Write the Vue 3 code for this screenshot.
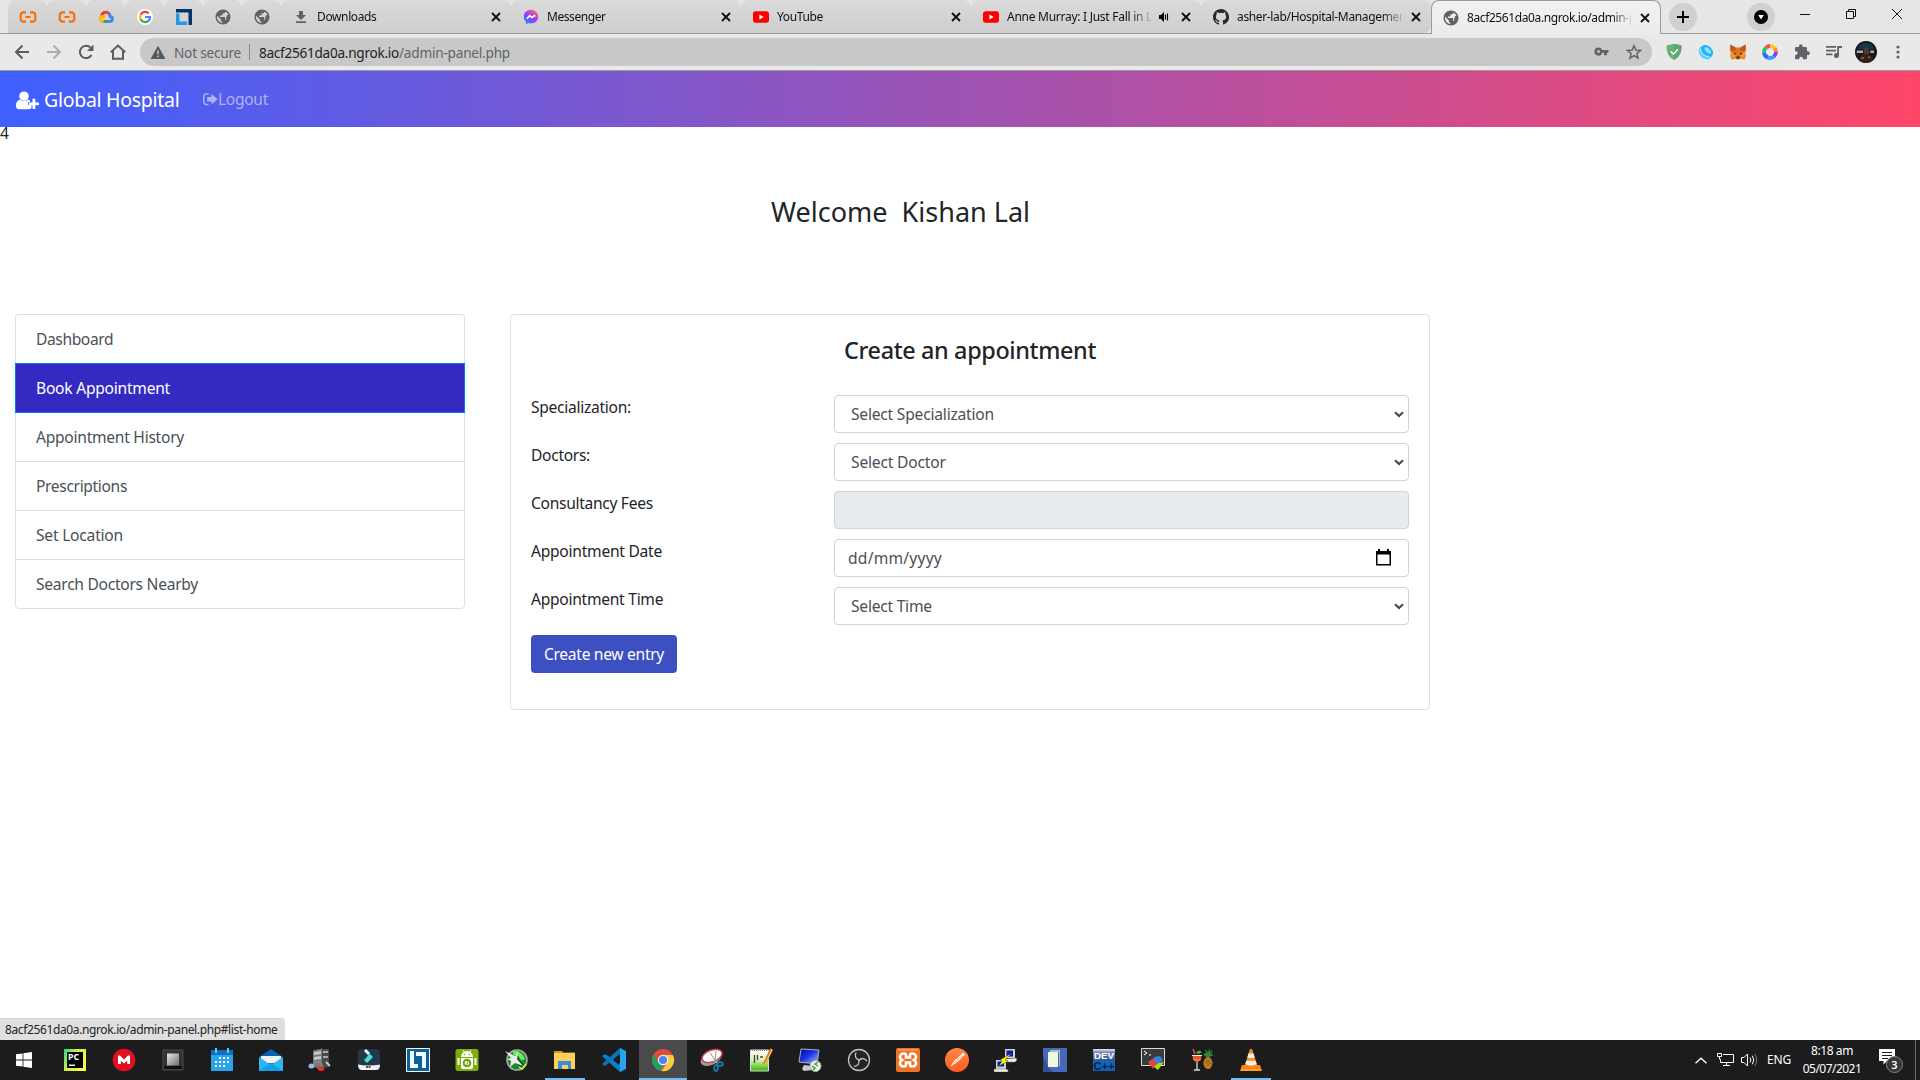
<script setup>
// Spreads a label over a given width by adjusting its tracking
const applyFit = (el, { value }) => {
  if (!value) return
  el.style.letterSpacing = '0px'
  const range = document.createRange()
  range.selectNodeContents(el)
  const natural = range.getBoundingClientRect().width
  el.style.letterSpacing = `${(value - natural) / el.textContent.length}px`
}
const vFit = { mounted: applyFit }

const pinned = ['cloud', 'cloud', 'gcp', 'google', 'linux', 'globe', 'globe']
const tabs = [
  { icon: 'download', title: 'Downloads', w: 59.5 },
  { icon: 'messenger', title: 'Messenger', w: 58.5 },
  { icon: 'youtube', title: 'YouTube', w: 46 },
  { icon: 'youtube', title: 'Anne Murray: I Just Fall in L', w: 145, audio: true },
  { icon: 'github', title: 'asher-lab/Hospital-Managemen', w: 169 },
  { icon: 'globe', title: '8acf2561da0a.ngrok.io/admin-pa', w: 175, active: true }
]

const menu = [
  { label: 'Dashboard', w: 77.2 },
  { label: 'Book Appointment', w: 134 },
  { label: 'Appointment History', w: 148 },
  { label: 'Prescriptions', w: 91 },
  { label: 'Set Location', w: 87 },
  { label: 'Search Doctors Nearby', w: 162 }
]
menu[1].active = true

const fields = [
  { label: 'Specialization:', lw: 100, kind: 'select', text: 'Select Specialization', w: 143 },
  { label: 'Doctors:', lw: 59, kind: 'select', text: 'Select Doctor', w: 94.8 },
  { label: 'Consultancy Fees', lw: 121.8, kind: 'readonly' },
  { label: 'Appointment Date', lw: 131, kind: 'date', text: 'dd/mm/yyyy', w: 94 },
  { label: 'Appointment Time', lw: 132.2, kind: 'select', text: 'Select Time', w: 80.8 }
]
</script>

<template>
  <div class="screen">
    <svg width="0" height="0" class="defs">
      <defs>
        <linearGradient id="msg" x1="0.2" y1="1" x2="0.8" y2="0">
          <stop offset="0" stop-color="#0a95ff" /><stop offset=".5" stop-color="#9a36ff" /><stop offset="1" stop-color="#ff6a68" />
        </linearGradient>
        <linearGradient id="pc" x1="0" y1="0" x2="1" y2=".6">
          <stop offset="0" stop-color="#21d789" /><stop offset=".45" stop-color="#c9ec4e" /><stop offset="1" stop-color="#fcf84a" />
        </linearGradient>
        <linearGradient id="chip" x1="0" y1="0" x2="1" y2="1">
          <stop offset="0" stop-color="#e8e8e8" /><stop offset="1" stop-color="#707070" />
        </linearGradient>
        <linearGradient id="blue" x1="0" y1="0" x2="1" y2="1">
          <stop offset="0" stop-color="#0008a8" /><stop offset=".45" stop-color="#1a2fe0" /><stop offset="1" stop-color="#b5c8ff" />
        </linearGradient>
        <linearGradient id="dev" x1="0" y1="0" x2="0" y2="1">
          <stop offset="0" stop-color="#e6e8f4" /><stop offset=".15" stop-color="#7c88bc" /><stop offset=".5" stop-color="#34549c" /><stop offset=".55" stop-color="#1765b8" /><stop offset="1" stop-color="#0f5fb4" />
        </linearGradient>
        <linearGradient id="green" x1="0" y1="0" x2="0" y2="1">
          <stop offset="0" stop-color="#fff" /><stop offset=".45" stop-color="#e0f4c0" /><stop offset="1" stop-color="#35b400" />
        </linearGradient>
        <linearGradient id="orange" x1="0" y1="0" x2="0" y2="1">
          <stop offset="0" stop-color="#ff8a45" /><stop offset="1" stop-color="#ff5a24" />
        </linearGradient>
        <symbol id="globe" viewBox="1.300 1.300 21.400 21.400">
          <path fill="#5f6368" d="M12 2C6.480 2 2 6.480 2 12s4.480 10 10 10 10-4.480 10-10S17.520 2 12 2zm-1 17.930c-3.950-.49-7-3.850-7-7.930 0-.62.08-1.210.21-1.790L9 15v1c0 1.100.9 2 2 2v1.930zm6.900-2.540c-.26-.81-1-1.390-1.900-1.390h-1v-3c0-.55-.45-1-1-1H8v-2h2c.55 0 1-.45 1-1V7h2c1.100 0 2-.9 2-2v-.41c2.930 1.190 5 4.060 5 7.410 0 2.080-.8 3.970-2.100 5.390z" />
          <path fill="#5f6368" d="M12 3c-3 0-5.500 1.200-7 3.500l5 3h1V7h2c1.100 0 2-.9 2-2V3.500zM20 9l-3 1-1 6 2 2c2-2 3-5 2-9z" />
        </symbol>
      </defs>
    </svg>

    <!-- Browser tab strip -->
    <header class="strip">
      <div v-for="(p, i) in pinned" :key="i" class="pin">
        <svg v-if="p === 'cloud'" width="18" height="16" viewBox="0 0 18 16" fill="none" stroke="#ff6a00" stroke-width="2.1">
          <path d="M7 3.400H4.200A2.500 2.500 0 0 0 1.700 6v4a2.500 2.500 0 0 0 2.500 2.600H7M11 3.400h2.800A2.500 2.500 0 0 1 16.300 6v4a2.500 2.500 0 0 1-2.500 2.600H11M6.500 8h5" />
        </svg>
        <svg v-else-if="p === 'gcp'" width="16" height="16" viewBox="0 0 16 16" fill="none" stroke-width="3">
          <path d="M3.300 7.500C4 4.500 5.600 3.300 8 3.300c1.500 0 2.800.7 3.700 2.200" stroke="#ea4335" />
          <path d="M11 5c1 1 1.200 1.700 1.200 2.600 3.300.5 2.500 4.900-.4 4.900H8" stroke="#4285f4" />
          <path d="M8.500 12.500H4.500" stroke="#34a853" />
          <path d="M5.500 12.500c-3.600 0-4.700-4-1.900-4.900 1.500-.4 2.400.5 3.400 1.500" stroke="#fbbc05" />
        </svg>
        <svg v-else-if="p === 'google'" width="16" height="16" viewBox="0 0 16 16">
          <circle cx="8" cy="8" r="8" fill="#fff" />
          <g fill="none" stroke-width="2.200">
            <path d="M11.700 4.400A5 5 0 0 0 3.600 5.700" stroke="#ea4335" />
            <path d="M3.600 5.700a5 5 0 0 0 0 4.700" stroke="#fbbc05" />
            <path d="M3.600 10.300a5 5 0 0 0 7.900 1.500" stroke="#34a853" />
            <path d="M11.400 11.900A5 5 0 0 0 13 8H8" stroke="#4285f4" />
          </g>
        </svg>
        <svg v-else-if="p === 'linux'" width="16" height="16" viewBox="0 0 16 16">
          <path d="M0 0h16v16h-3.500V3.500H0z" fill="#053764" />
          <path d="M0 4.500h3.500v8H11V16H0z" fill="#2199e8" />
        </svg>
        <svg v-else width="16" height="16"><use href="#globe" /></svg>
      </div>

      <div v-for="t in tabs" :key="t.title" class="tab" :class="{ active: t.active }">
        <span class="fav">
          <svg v-if="t.icon === 'download'" width="16" height="16" viewBox="0 0 16 16" fill="#5f6368">
            <path d="M6 2h4v4h3l-5 5-5-5h3zM3 12.300h10V14H3z" />
          </svg>
          <svg v-else-if="t.icon === 'messenger'" width="16" height="16" viewBox="0 0 16 16">
            <path d="M8 .8C3.900.8.800 3.800.800 7.700c0 2.100.8 3.900 2.200 5.100v2.500l2.300-1.200c5 1.300 9.900-1.600 9.900-6.400C15.200 3.800 12.100.8 8 .8z" fill="url(#msg)" />
            <path d="M3.800 9.700 6.600 6.600l2.300 1.800 3.400-2.200" fill="none" stroke="#fff" stroke-width="1.700" />
          </svg>
          <svg v-else-if="t.icon === 'youtube'" width="16" height="16" viewBox="0 0 16 16">
            <rect y="2.300" width="16" height="11.400" rx="2.600" fill="#f00" /><path d="m6.400 5.500 4.300 2.500-4.300 2.500z" fill="#fff" />
          </svg>
          <svg v-else-if="t.icon === 'github'" width="16" height="16" viewBox="0 0 16 16" fill="#24292e">
            <path d="M8 0C3.580 0 0 3.580 0 8c0 3.540 2.290 6.530 5.470 7.590.4.070.55-.17.55-.38v-1.490c-2.010.37-2.530-.49-2.690-.94-.09-.23-.48-.94-.82-1.130-.28-.15-.68-.52-.01-.53.63-.01 1.080.58 1.230.82.72 1.210 1.870.87 2.330.66.07-.52.28-.87.51-1.070-1.780-.2-3.640-.89-3.640-3.950 0-.87.31-1.590.82-2.150-.08-.2-.36-1.020.08-2.120 0 0 .67-.21 2.200.82a7.600 7.600 0 0 1 4 0c1.530-1.040 2.200-.82 2.200-.82.44 1.100.16 1.920.08 2.120.51.56.82 1.270.82 2.150 0 3.070-1.870 3.750-3.650 3.950.29.25.54.73.54 1.480v2.200c0 .21.15.46.55.38A8 8 0 0 0 8 0z" />
          </svg>
          <svg v-else width="16" height="16"><use href="#globe" /></svg>
        </span>
        <span class="title"><span v-fit="t.w">{{ t.title }}</span></span>
        <svg v-if="t.audio" class="audio" width="12" height="12" viewBox="0 0 12 12">
          <path d="M1 4h2l3-3v10L3 8H1z" /><path d="M7.500 3.500v5M9.500 2.500v7" stroke="#000" stroke-width="1.100" fill="none" />
        </svg>
        <svg class="x" width="10" height="10" viewBox="0 0 10 10" stroke="#111" stroke-width="1.900"><path d="m1 1 8 8M9 1 1 9" /></svg>
      </div>

      <span class="round plus"><svg width="12" height="12" viewBox="0 0 12 12" stroke="#000" stroke-width="2"><path d="M6 0v12M0 6h12" /></svg></span>
      <span class="round search"><svg width="14" height="14" viewBox="0 0 14 14"><circle cx="7" cy="7" r="7" /><path d="M4.200 5h5.600L7 9.500z" fill="#fff" /></svg></span>
      <svg class="winctl" width="104" height="12" viewBox="0 0 104 12" fill="none" stroke="#111" stroke-width="1">
        <path d="M0 6.500h10M46.500 3.500h7v7h-7zM48.500 3.500v-2h7v7h-2M92 1l10 10M102 1 92 11" />
      </svg>
    </header>

    <!-- Address bar -->
    <div class="toolbar">
      <svg class="navs" width="116" height="18" viewBox="0 0 116 18" fill="none" stroke="#5a5d61" stroke-width="2">
        <path d="M19 9H6.500M12.500 2.500 6 9l6.500 6.500" />
        <path d="M37 9h12.500M43.500 2.500 50 9l-6.500 6.500" stroke="#acaeb0" />
        <path d="M81.500 12A6.200 6.200 0 1 1 80.600 4.600" />
        <path d="M83.500 1.500V8H77z" fill="#5a5d61" stroke="none" />
        <path d="M100.800 9.200 108 2.500l7.200 6.700M103 8v7.800h10V8" />
      </svg>
      <div class="pill">
        <svg class="warn" width="16" height="15" viewBox="0 0 16 15"><path d="M8 .8 15.500 14H.5z" fill="#55585c" /><path d="M8 5.500v3.700M8 10.500v1.700" stroke="#c8c8c8" stroke-width="1.500" /></svg>
        <span class="ns"><span v-fit="67">Not secure</span></span>
        <i class="bar"></i>
        <span class="url"><span v-fit="140">8acf2561da0a.ngrok.io</span><span v-fit="111" class="path">/admin-panel.php</span></span>
        <svg class="key" width="15" height="9" viewBox="0 0 15 9"><path d="M4.500.4a4.100 4.100 0 1 0 3.900 5.400H10v2.400h3V5.800h1.500V2.900H8.400A4.100 4.100 0 0 0 4.500.4zm0 2.700a1.400 1.400 0 1 1 0 2.800 1.400 1.400 0 0 1 0-2.800z" fill="#5f6368" fill-rule="evenodd" /></svg>
        <svg class="star" width="16" height="16" viewBox="0 0 16 16" fill="none" stroke="#5f6368" stroke-width="1.500"><path d="m8 1.800 1.800 4.300 4.700.4-3.600 3 1.100 4.600L8 11.700l-4 2.400 1.100-4.600-3.600-3 4.700-.4z" /></svg>
      </div>
      <div class="exts">
        <svg width="16" height="16" viewBox="0 0 16 16"><path d="M8 0c2.500.2 5 .6 7.500 1.600C15.600 9 13.500 13 8 16 2.500 13 .4 9 .5 1.600 3 .6 5.500.2 8 0z" fill="#67b279" /><path d="M8 0c2.500.2 5 .6 7.500 1.600C15.600 9 13.500 13 8 16z" fill="#5fa970" /><path d="m4.800 7.500 2.700 2.700 4.300-5" fill="none" stroke="#fff" stroke-width="1.500" /></svg>
        <svg width="16" height="16" viewBox="0 0 16 16"><ellipse cx="7.200" cy="8.800" rx="7.500" ry="5.500" transform="rotate(45 7.200 8.800)" fill="#4fd2ff" /><ellipse cx="9" cy="7" rx="7" ry="5" transform="rotate(45 9 7)" fill="#22b4ff" /><ellipse cx="9.800" cy="6.300" rx="4" ry="2" transform="rotate(45 9.800 6.300)" fill="#8fe2ff" /><path d="M2.500 4.500c0 4.500 3.500 8 9 8.500" fill="none" stroke="#e6f8ff" stroke-width=".9" /></svg>
        <svg width="18" height="16" viewBox="0 0 18 16"><path d="m1.500.5 5 3h5l5-3 .8 5-1.200 3 .7 3.500-1.300 3.500-3.500-1L10 15.500H8l-2-1-3.500 1L1.200 12l.7-3.500-1.200-3z" fill="#e2761b" /><path d="m1.500.5 5 3 .5 3-5 .5zM16.500.5l-5 3-.5 3 5 .5z" fill="#b75a24" /><path d="m2 8.500 4 1 .5 4-4.500.2zM16 8.500l-4 1-.5 4 4.500.2z" fill="#f6932f" /><path d="m5 8.500 2.200 1-.3 1L5 10zm8 0-2.200 1 .3 1L13 10zM7.500 12.500h3v2h-3z" fill="#26323d" /></svg>
        <svg width="16" height="16" viewBox="0 0 16 16" fill="none" stroke-width="3.800"><path d="M8 2a6 6 0 0 1 4.700 2.300" stroke="#ffc62c" /><path d="M12.700 4.300A6 6 0 0 1 14 8" stroke="#ff8a2a" /><path d="M14 8a6 6 0 0 1-2.300 4.700" stroke="#7a43f2" /><path d="M11.700 12.700A6 6 0 0 1 6 13.600" stroke="#2aa8f5" /><path d="M6 13.600A6 6 0 0 1 2 8.500" stroke="#3169eb" /><path d="M2 8.500a6 6 0 0 1 2.100-5" stroke="#25c46b" /><path d="M4.100 3.500A6 6 0 0 1 8 2" stroke="#ff4c4c" /></svg>
        <svg width="16" height="16" viewBox="0 0 24 24" fill="#5f6368"><path d="M21 11h-1.500V6.500a2 2 0 0 0-2-2H13V3a2.750 2.750 0 0 0-5.500 0v1.500H3.500a2 2 0 0 0-2 2v4.300H3a2.900 2.900 0 0 1 0 5.700H1.500v4.500a2 2 0 0 0 2 2h4.300V21.500a2.900 2.900 0 0 1 5.700 0V23h4a2 2 0 0 0 2-2v-4.500H21a2.750 2.750 0 0 0 0-5.500z" /></svg>
        <svg width="16" height="14" viewBox="0 0 16 14" fill="#5f6368"><path d="M0 1h10v1.700H0zM0 4.800h10v1.700H0zM0 8.600h6.500v1.700H0zM11.200 1H16v2h-3v7.500a2.500 2.500 0 1 1-1.800-2.400z" /></svg>
        <svg width="22" height="22" viewBox="0 0 22 22"><circle cx="11" cy="11" r="11" fill="#17191d" /><path d="M5 4c3-3 9-3 13 1l1 3-8 1-8-1z" fill="#153946" /><path d="M2 9.500h6v2.500H1.500zM15.500 9.500H19V12h-4z" fill="#8fb0bc" /><path d="M5 10h2v2H5z" fill="#e2a267" /><ellipse cx="11.300" cy="10.500" rx="2.800" ry="3.500" fill="#54362b" /><path d="M4 19c1-5 4-6 7-6s6 1 7 5c-4 5-10 5-14 1z" fill="#352117" /><path d="M6 16h3v2H6zm7-1h2v2h-2z" fill="#845038" /></svg>
        <svg width="4" height="14" viewBox="0 0 4 14" fill="#5f6368"><circle cx="2" cy="2" r="1.600" /><circle cx="2" cy="7" r="1.600" /><circle cx="2" cy="12" r="1.600" /></svg>
      </div>
    </div>

    <!-- Page -->
    <main class="page">
      <nav class="navbar">
        <svg class="user" width="24" height="19" viewBox="0 0 24 19" fill="#fff"><circle cx="8" cy="5.200" r="4.800" /><path d="M3.800 8.500C1 9.300 0 12 0 15c0 2 1.200 3.300 3 3.300h10c1.200 0 2-.5 2.500-1.300V14h-3.300v-3h2.300c-.5-1.300-1.300-2.200-2.300-2.500-2.500 2.300-6 2.300-8.400 0z" /><path d="M16.500 7.800h2.800v3.600H23v2.800h-3.700v3.700h-2.800v-3.700H13v-2.800h3.500z" /></svg>
        <span class="brand"><span v-fit="135.500">Global Hospital</span></span>
        <svg class="out" width="15" height="13" viewBox="0 0 15 13"><path d="M5.500 1H3a2.200 2.200 0 0 0-2.200 2.200v6.100A2.200 2.200 0 0 0 3 11.500h2.500" fill="none" stroke="#b0b3f4" stroke-width="1.400" /><path d="M8.500 1 14.600 6.300 8.500 11.500V8.500H4.200V4h4.300z" fill="#b0b3f4" /></svg>
        <span class="logout"><span v-fit="50">Logout</span></span>
      </nav>
      <div class="count">4</div>
      <h3 class="welcome"><span v-fit="259">Welcome&nbsp; Kishan Lal</span></h3>

      <div class="content">
        <ul class="menu">
          <li v-for="m in menu" :key="m.label" :class="{ active: m.active }"><span v-fit="m.w">{{ m.label }}</span></li>
        </ul>
        <section class="card">
          <h4><span v-fit="252">Create an appointment</span></h4>
          <div v-for="f in fields" :key="f.label" class="row">
            <label><span v-fit="f.lw">{{ f.label }}</span></label>
            <div class="control" :class="f.kind">
              <span v-if="f.text" v-fit="f.w">{{ f.text }}</span>
              <svg v-if="f.kind === 'select'" width="10" height="7" viewBox="0 0 10 7" fill="none" stroke="#40474e" stroke-width="2"><path d="m1 1.200 4 3.800 4-3.800" /></svg>
              <svg v-if="f.kind === 'date'" width="15" height="17" viewBox="0 0 15 17"><path d="M2 0h2v2h7V0h2v2h2v14.500H0V2h2zM1.500 5.500V15h12V5.500z" fill-rule="evenodd" /></svg>
            </div>
          </div>
          <button class="submit"><span v-fit="120">Create new entry</span></button>
        </section>
      </div>
      <div class="status"><span v-fit="272.500">8acf2561da0a.ngrok.io/admin-panel.php#list-home</span></div>
    </main>

    <!-- Windows taskbar -->
    <footer class="taskbar">
      <div class="apps">
        <span class="app start"><svg width="16" height="16" viewBox="0 0 16 16" fill="#fff"><path d="M0 2.300 6.600 1.400v6.200H0zM7.400 1.300 16 0v7.600H7.400zM0 8.400h6.600v6.200L0 13.700zM7.400 8.400H16V16l-8.600-1.300z" /></svg></span>
        <span class="app"><svg viewBox="0 0 24 24"><path d="M1 1h22v22H1z" fill="url(#pc)" /><path d="M4 4h16v16H4z" /><text x="5" y="12" font-size="8" font-weight="700" fill="#fff" textLength="11" lengthAdjust="spacingAndGlyphs" class="ico">PC</text><path d="M6 16.500h6V18H6z" fill="#fff" /></svg></span>
        <span class="app"><svg viewBox="0 0 24 24"><circle cx="12" cy="12" r="11.300" fill="#e01020" /><path d="M6 16V7.500h2l4 4 4-4h2V16h-2.800v-3.300L12 15.500l-3.200-2.800V16z" fill="#fff" /></svg></span>
        <span class="app"><svg viewBox="0 0 24 24"><path d="M2 2h20v20H2z" fill="#34322f" stroke="#4c4a46" /><path d="M6 5.500h12v12H6z" fill="url(#chip)" /><path d="M3 19.500h18" stroke="#11100f" stroke-width="3" /></svg></span>
        <span class="app"><svg viewBox="0 0 24 24"><path d="M1 2h22v21H1z" fill="#2aa5ec" /><path d="M1 2h22v5H1z" fill="#0f6fbd" /><path d="M5 0h2v5H5zm12 0h2v5h-2z" fill="#5dc9f8" /><path d="M9 9h2v2H9zm4 0h2v2h-2zm4 0h2v2h-2zM5 13h2v2H5zm4 0h2v2H9zm4 0h2v2h-2zm4 0h2v2h-2zM5 17h2v2H5zm4 0h2v2H9zm4 0h2v2h-2z" fill="#fff" /></svg></span>
        <span class="app"><svg viewBox="0 0 24 24"><path d="M0 9 12 1l12 8v14H0z" fill="#0a60b4" /><path d="M2 8h20v7H2z" fill="#f1f1f1" /><path d="m0 9 12 8 12-8v14H0z" fill="#31b4f2" /><path d="m0 23 12-8 12 8z" fill="#159fe6" /></svg></span>
        <span class="app"><svg viewBox="0 0 24 24"><path d="m5 2.500 9-2 2 1V19l-7 1-4-2z" fill="#77797b" /><path d="m14 1 7 0v18l-7 1z" fill="#48494a" /><path d="m6 4 7-1v3L6 7zm0 5 7-1v3l-7 1z" fill="#c7c9ca" /><path d="m15 3 5 0v2h-5zm0 5h5v2h-5z" fill="#a7a9aa" /><path d="M7 15q6-4 8 4" fill="none" stroke="#999" /><ellipse cx="3.500" cy="18" rx="3" ry="2.500" fill="#9eb9e4" /><path d="M9 20c1-4 3-1 5 0 2-2 3-1 2 2-3 2-6 1-7-2z" fill="#ee3028" /><path d="m18 14 4 4" stroke="#ccc" stroke-width="2" /></svg></span>
        <span class="app"><svg viewBox="0 0 24 24"><rect x="1" y="1" width="22" height="20" rx="4" fill="#21394b" /><path d="m10 3 2-2 2 2 2 2-2 2-2-2z" fill="#fff" transform="translate(-3)" /><path d="m12 5 4 4-6 6-3-3 3-3z" fill="#49dfc4" /><path d="M1 16.500q4 1 11 1t11-1q0 5.500-4 5.500H5q-4 0-4-5.500z" fill="#f1f3f5" /><path d="M9 19h5" stroke="#222" stroke-width="1.500" stroke-dasharray="2 .500" /></svg></span>
        <span class="app"><svg viewBox="0 0 24 24"><path d="M.5.500h23v23H.5z" fill="#086299" stroke="#f4f8fb" /><path d="M4 3h4v13h4v4H4z" fill="#f1f6f9" /><path d="M10 4h10v16h-4V8h-6z" fill="#f1f6f9" /></svg></span>
        <span class="app"><svg viewBox="0 0 24 24"><rect x=".500" y="1" width="23" height="22" rx="2.500" fill="#7daf08" /><path d="M6 9a6 6 0 0 1 12 0zM6 10h12v9q0 2-2 2H8q-2 0-2-2zM2.500 10h2v7h-2zm17 0h2v7h-2z" fill="#fff" /><path d="m8 2 2 3m6-3-2 3" stroke="#fff" stroke-width="1" /><circle cx="12" cy="15" r="3.300" fill="none" stroke="#6d9c08" stroke-width="2" /><path d="m11.500 17 1.500-4" stroke="#6d9c08" /><circle cx="9.500" cy="6.500" r=".8" fill="#7daf08" /><circle cx="14.500" cy="6.500" r=".8" fill="#7daf08" /></svg></span>
        <span class="app"><svg viewBox="0 0 24 24"><circle cx="13" cy="12" r="10" fill="#168a29" stroke="#a7aaa7" stroke-width="1.600" /><path d="M9 5q8-1 10 7" fill="none" stroke="#68ec5c" stroke-width="4" /><path d="m12 11 7 8" stroke="#074b17" stroke-width="4" /><path d="m1 3 10 5 3-5-1 8 6 7-8-3-5 4 1-6-4-2 4-1z" fill="#e7ebe8" /><path d="m15 19 3 2 4-5" fill="none" stroke="#b0f239" stroke-width="2" /></svg></span>
        <span class="app open"><svg viewBox="0 0 24 24"><path d="M1 3h8l1 1.500h12V8H1z" fill="#d89b13" /><path d="M1 5h21v16H1z" fill="#ffcf5a" /><path d="M5 13h13v8h-3v-4H9v4H5z" fill="#3590dc" /></svg></span>
        <span class="app"><svg viewBox="0 0 24 24"><path d="m0 8 3-2 21 13-6 5z" fill="#0a80cf" /><path d="m0 16 3 2L19 5l-1-5z" fill="#0876bd" /><path d="m18 0 6 3v18l-6 3z" fill="#27a4f0" /><path d="M17 7v10l-6-5z" fill="#1d1d1d" /></svg></span>
        <span class="app open current"><svg viewBox="0 0 24 24"><circle cx="12" cy="12" r="11" fill="#dd4c3d" /><path d="M2.500 6.500 7 14.500 12 17.300 9.500 22.700A11 11 0 0 1 2.500 6.500z" fill="#17a462" /><path d="M12 7h9.800A11 11 0 0 1 10.500 23l5.500-8z" fill="#fdcc43" /><circle cx="12" cy="12" r="5.200" fill="#f5f5f5" /><circle cx="12" cy="12" r="4.100" fill="#4685f4" /></svg></span>
        <span class="app"><svg viewBox="0 0 24 24"><ellipse cx="11" cy="11" rx="11" ry="6" transform="rotate(-23 11 11)" fill="#9b9c9e" /><ellipse cx="12" cy="8" rx="10.500" ry="5.800" transform="rotate(-20 12 8)" fill="#fff" stroke="#d84045" stroke-width="1.500" /><path d="m10 5 8 11M16 3l-1 12" stroke="#a4a7ad" stroke-width="1.200" /><g fill="none" stroke="#1681bb" stroke-width="1.700"><ellipse cx="20" cy="16" rx="3" ry="1.800" /><ellipse cx="16" cy="20" rx="1.800" ry="3" /></g></svg></span>
        <span class="app"><svg viewBox="0 0 24 24"><path d="M1.500 2h18v21h-18z" fill="url(#green)" stroke="#dadada" /><path d="M3 2h15" stroke="#888" stroke-width="2" stroke-dasharray="1" /><path d="M5.500 7v8m3-8v5M11 9h3" stroke="#404b40" stroke-width="1.400" /><path d="M22.500 1 15 17" stroke="#d67b18" stroke-width="3" /><path d="m22 1 1 1-8 16" fill="none" stroke="#ffe06a" stroke-width="1" /></svg></span>
        <span class="app"><svg viewBox="0 0 24 24"><path d="m3 1 18 1-2 14L1 14z" fill="url(#blue)" stroke="#a9b1c0" /><path d="m6 17 9 1v4l-9 1-2-2z" fill="#c9cbce" /><circle cx="17.500" cy="18" r="5.500" fill="#eef0ee" stroke="#aaa" /><path d="m14 18 3 2-2 2m5-8-3 2 3 2" fill="none" stroke="#3a9e4b" stroke-width="1.500" /></svg></span>
        <span class="app"><svg viewBox="0 0 24 24"><circle cx="12" cy="12" r="10.500" fill="#252326" stroke="#c5c4c5" stroke-width="1.300" /><g fill="none" stroke="#c5c4c5" stroke-width="1.300"><path d="M12.500 12c-4-1-5-4-3.500-7.500" /><path d="M12.500 12c-4-1-5-4-3.500-7.500" transform="rotate(120 12 12)" /><path d="M12.500 12c-4-1-5-4-3.500-7.500" transform="rotate(240 12 12)" /></g></svg></span>
        <span class="app"><svg viewBox="0 0 24 24"><rect width="24" height="24" rx="2" fill="#ee7327" /><path d="M2 2h20" stroke="#ffb07b" stroke-width="1" /><path d="M8 5.500q-4 0-4 3.500 0 2 2 3-2 1-2 3 0 3.500 4 3.500 2 0 2-2v-2h4v2q0 2 2 2 4 0 4-3.500 0-2-2-3 2-1 2-3 0-3.500-4-3.500-2 0-2 2v2h-4v-2q0-2-2-2z" fill="none" stroke="#fff" stroke-width="2.600" /></svg></span>
        <span class="app"><svg viewBox="0 0 24 24"><circle cx="12" cy="12" r="12" fill="url(#orange)" /><path d="m6 18 5-7 2 2-7 5zM12 11l4-4q2-1 1.500 1l-4 5" fill="#ffc9b2" stroke="#fff" stroke-width=".8" /><circle cx="18" cy="6.500" r="1.600" fill="#fff" /></svg></span>
        <span class="app"><svg viewBox="0 0 24 24"><path d="M11 1h10v9H11zM2 12h10v9H2z" fill="#d5d5ce" /><path d="M12.500 2.500H19v6h-6.500zM3.500 13.500H10v5H3.500z" fill="#0718d0" /><path d="m11 11 11-1 1 2-2 2h-9zM0 21h12l2 1v2H0z" fill="#efefe6" stroke="#777" stroke-width=".600" /><path d="m18 5-7 7 3 1-9 5 3-5-2-1z" fill="#ffff0c" stroke="#44470a" stroke-width=".500" /></svg></span>
        <span class="app"><svg viewBox="0 0 24 24"><path d="M0 0h24v24H0z" fill="#4668b8" /><path d="m5 19 5 5H0V8z" fill="#304e94" /><path d="M7 2h10v16h-1V4H7z" fill="#a7bdc0" /><path d="M5 4h10v15H5z" fill="#eef9df" /></svg></span>
        <span class="app"><svg viewBox="0 0 24 24"><path d="M1 1h22v22H1z" fill="url(#dev)" /><text x="2" y="10.500" font-size="9.500" font-weight="700" fill="#fff" textLength="20" lengthAdjust="spacingAndGlyphs" class="dev">DEV</text><text x="1.500" y="22" font-size="10" font-weight="700" fill="#08203d" textLength="21" lengthAdjust="spacingAndGlyphs" class="dev">C++</text></svg></span>
        <span class="app"><svg viewBox="0 0 24 24"><path d="M.500.500h23v17H.5z" fill="#373b3c" stroke="#dadada" /><path d="m3 3 3 2-3 2m5 0h2" fill="none" stroke="#fff" /><path d="m7 14 6-4 4 4-5 7z" fill="#ef3e42" /><path d="m13 9 6-1 3 4-5 4-4-3z" fill="#3682e4" /><path d="m17 15 6-1-6 8-4-3z" fill="#a5de14" /></svg></span>
        <span class="app"><svg viewBox="0 0 24 24"><ellipse cx="18" cy="15" rx="4.500" ry="6" fill="#c78424" /><path d="m14 12 7 7m-6-9 7 7m-1-7-6 6m7-4-6 7" stroke="#7a4e16" stroke-width=".7" /><path d="m17 10-4-4 3-1-1-4 3 3 2-4v4l3-2-2 4 3 1z" fill="#31842f" /><path d="M2.500 8h9l-.8 4q-3.700 4-7.400 0z" fill="#e85532" /><path d="M3 11q4 3 8 0" stroke="#f8a35c" fill="none" /><path d="M7 14v8M4 22h6" stroke="#d9dedf" stroke-width="1.300" /><path d="M2 7.500h10" stroke="#f9e9dc" stroke-width="1" /><path d="m3 1 2 5" stroke="#eb41a4" stroke-width="1.500" /><path d="M6 5q2-4 6-1l-3 2z" fill="#4cb236" /></svg></span>
        <span class="app open short"><svg viewBox="0 0 24 24"><path d="M3 17h18l2 6H1z" fill="#f38510" /><path d="m11 1 2 0 5.500 17q-6.500 4-13 0z" fill="#f78c18" /><path d="m9.500 5.500 5 0 1.300 4q-3.700 1.500-7.500 0zM7.300 12.700h9.400l1 3.300q-5.700 3-11.400 0z" fill="#eee" /><path d="M2 22h20" stroke="#ffb646" /></svg></span>
      </div>
      <div class="tray">
        <svg class="up" width="12" height="7" viewBox="0 0 12 7" fill="none" stroke="#fff" stroke-width="1.300"><path d="m.5 6.200 5.500-5 5.500 5" /></svg>
        <svg class="net" width="17" height="14" viewBox="0 0 17 14" fill="none" stroke="#fff" stroke-width="1"><path d="M6 1.500h10.500v8h-13V6M9.500 9.500v3M6 12.500h7M.5.500h4v3h-4zM2.500 3.500v3" /></svg>
        <svg class="vol" width="17" height="14" viewBox="0 0 17 14" fill="none" stroke="#fff"><path d="M.5 4.500H3L6.500 1v12L3 9.500H.5zM9 4.500q1.800 2.500 0 5M11.300 2.700q3 4.300 0 8.600" /><path d="M13.700 1q4 6 0 12" stroke="#777" /></svg>
        <span class="eng"><span v-fit="24">ENG</span></span>
        <div class="clock"><span v-fit="42">8:18 am</span><span v-fit="58.500">05/07/2021</span></div>
        <svg class="note" width="25" height="25" viewBox="0 0 25 25"><path d="M0 1h16v12H8l-3.500 3.500V13H0z" fill="#fff" /><path d="M3 4.500h10M3 7.500h10M3 10.500h6" stroke="#1c1c1c" /><circle cx="15.500" cy="16.500" r="8" fill="#363636" stroke="#858585" stroke-width="1" /><text x="15.500" y="20.500" text-anchor="middle" font-size="11" font-weight="600" fill="#fff" class="ico">3</text></svg>
        <i class="peek"></i>
      </div>
    </footer>
  </div>
</template>

<style>
body { margin: 0; background: #fff; overflow: hidden; }
</style>

<style scoped>
* { box-sizing: border-box; }
.screen { width: 1920px; height: 1080px; display: flex; flex-direction: column; overflow: hidden; font-family: "Noto Sans", "Open Sans", sans-serif; color: #212529; }
.defs { position: absolute; }
svg { display: block; flex: none; }
span { white-space: nowrap; }
.ico { font-family: "Noto Sans", sans-serif; }
.dev { font-family: "Liberation Sans", sans-serif; }

.strip { position: relative; height: 34px; flex: none; display: flex; padding-left: 8px; background: #e6e6e6; border-bottom: 1px solid #9b9b9b; }
.pin, .tab { height: 33px; background: linear-gradient(#dadada, #cecece); border-radius: 8px 8px 0 0; position: relative; display: flex; align-items: center; }
.pin { width: 39px; justify-content: center; padding-left: 1px; }
.pin::after, .tab::after { content: ""; position: absolute; right: -1px; top: 7px; width: 1px; height: 20px; background: #858585; }
.tab { width: 230px; padding: 0 10px 0 12px; font-size: 12px; color: #111; }
.tab:nth-last-child(5)::after, .tab:nth-last-child(4)::after { display: none; }
.tab .title { flex: 1; margin-left: 8px; overflow: hidden; line-height: 20px; -webkit-mask-image: linear-gradient(to right, #000 calc(100% - 20px), rgba(0, 0, 0, .12)); }
.audio { margin: 0 11px 0 7px; }
.x { margin-left: 9px; }
.audio + .x { margin-left: 0; }
.tab:nth-last-child(5) { border-bottom-right-radius: 8px; }
.tab.active { z-index: 1; height: 34px; background: linear-gradient(#f1f1f1, #ececec); border: 1px solid #9b9b9b; border-bottom: 0; padding-left: 11px; padding-right: 10px; }
.round { width: 28px; height: 28px; border-radius: 50%; background: #d0d0d0; display: flex; align-items: center; justify-content: center; margin-top: 3px; }
.plus { margin-left: 8px; }
.search { margin-left: 50px; }
.winctl { margin: 8px 0 0 25px; }

.toolbar { height: 37px; flex: none; background: #e9e9e9; border-bottom: 1px solid #999; display: flex; align-items: center; }
.navs { margin-left: 10px; width: 116px; }
.pill { width: 1512px; height: 28px; margin-left: 14px; border-radius: 14px; background: #c8c8c8; display: flex; align-items: center; font-size: 13.600px; color: #606367; padding: 0 10px; }
.ns { margin-left: 8px; width: 75px; }
.bar { width: 1px; height: 16px; background: #8a8a8a; margin-right: 9px; }
.url { color: #1c1d1f; flex: 1; }
.url .path { color: #5f6368; }
.key { margin-right: 17px; margin-top: -1px; }
.exts { display: flex; align-items: center; padding-left: 14px; }
.exts svg:nth-child(2), .exts svg:nth-child(5), .exts svg:nth-child(6) { margin-left: 16px; }
.exts svg:nth-child(3), .exts svg:nth-child(4) { margin-left: 15px; }
.exts svg:nth-child(7) { margin-left: 13px; }
.exts svg:nth-child(8) { margin-left: 19px; }

.page { flex: 1; position: relative; font-size: 15.600px; line-height: 24px; }
.navbar { height: 56px; background: linear-gradient(to right, #3d60ff, #ff4668); display: flex; align-items: center; padding-left: 16px; }
.brand { margin: 2px 0 0 4px; font-size: 19.500px; line-height: 30px; color: #fff; width: 159px; }
.user { margin-top: 2px; }
.out { margin-top: 1px; }
.logout { color: #aeb1f5; margin-left: 0; }
.count { height: 24px; margin-top: -6px; clip-path: inset(6px 0 0 0); }
.welcome { font-weight: 400; font-size: 27px; line-height: 34px; margin: 50px 0 0; width: 1801px; text-align: center; white-space: pre; }
.content { display: flex; gap: 45px; padding: 85px 0 0 15px; align-items: flex-start; }
.menu { width: 450px; list-style: none; margin: 0; padding: 0; color: #495057; }
.menu li { height: 50px; padding: 12px 20px; border: 1px solid #dfdfdf; margin-bottom: -1px; position: relative; }
.menu li:first-child { border-radius: 4px 4px 0 0; }
.menu li:last-child { border-radius: 0 0 4px 4px; margin-bottom: 0; }
.menu li.active { background: #342ac1; border-color: #007bff; color: #fff; z-index: 1; }
.card { width: 920px; height: 396px; border: 1px solid #dfdfdf; border-radius: 4px; padding: 21px 20px 20px; }
h4 { margin: 0 0 30px; font-size: 23.400px; line-height: 29px; font-weight: 500; text-align: center; color: #212529; }
.row { display: flex; height: 38px; margin-bottom: 10px; }
label { width: 303px; }
.control { width: 575px; height: 38px; border: 1px solid #ced4da; border-radius: 4px; display: flex; align-items: center; justify-content: space-between; color: #495057; padding: 0 4px 0 16px; }
.control.readonly { background: #e9ecef; }
.control.date { padding: 0 17px 0 13px; }
.control.date svg { margin-top: -2px; }
.submit { width: 146px; height: 38px; padding: 0; background: #3c50c1; color: #fff; border: 0; border-radius: 4px; font: inherit; display: block; }
.status { position: absolute; left: 0; bottom: 0; width: 285px; height: 22px; padding-left: 5px; background: #dfdfdf; border-top: 1px solid #d5d5d5; border-top-right-radius: 4px; font-size: 12px; line-height: 22px; color: #222; }

.taskbar { height: 40px; flex: none; background: #1c1c1c; display: flex; justify-content: space-between; color: #fff; }
.apps { display: flex; gap: 1px; }
.app { width: 48px; height: 40px; display: flex; align-items: center; justify-content: center; position: relative; }
.app.start { margin-right: 2px; }
.app svg { width: 24px; height: 24px; }
.app.start svg { width: 16px; height: 16px; }
.app.open::after { content: ""; position: absolute; left: 4px; right: 4px; bottom: 0; height: 2px; background: #76b9ed; }
.app.current { background: #4a4a4a; }
.app.current::after { left: 0; right: 0; }
.tray { display: flex; align-items: center; font-size: 12px; width: 225px; }
.net { margin-left: 10px; }
.vol { margin-left: 7px; }
.eng { margin-left: 9px; margin-top: -1px; width: 36px; }
.clock { display: flex; flex-direction: column; align-items: center; line-height: 18px; width: 58px; margin-top: -1px; }
.note { margin-left: 18px; margin-top: 1px; }
.peek { width: 1px; height: 40px; background: #6a6a6a; margin-left: 11px; }
</style>
